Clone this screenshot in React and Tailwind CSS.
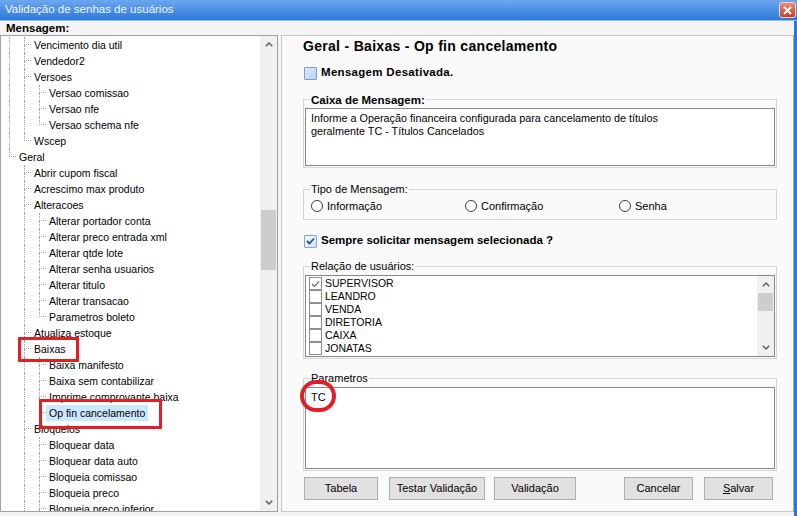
import React from "react";

const tree = [
  {
    t: null,
    c: [
      { t: "Vencimento dia util" },
      { t: "Vendedor2" },
      {
        t: "Versoes",
        c: [{ t: "Versao comissao" }, { t: "Versao nfe" }, { t: "Versao schema nfe" }],
      },
      { t: "Wscep" },
    ],
  },
  {
    t: "Geral",
    c: [
      { t: "Abrir cupom fiscal" },
      { t: "Acrescimo max produto" },
      {
        t: "Alteracoes",
        c: [
          { t: "Alterar portador conta" },
          { t: "Alterar preco entrada xml" },
          { t: "Alterar qtde lote" },
          { t: "Alterar senha usuarios" },
          { t: "Alterar titulo" },
          { t: "Alterar transacao" },
          { t: "Parametros boleto" },
        ],
      },
      { t: "Atualiza estoque" },
      {
        t: "Baixas",
        c: [
          { t: "Baixa manifesto" },
          { t: "Baixa sem contabilizar" },
          { t: "Imprime comprovante baixa" },
          { t: "Op fin cancelamento" },
        ],
      },
      {
        t: "Bloqueios",
        c: [
          { t: "Bloquear data" },
          { t: "Bloquear data auto" },
          { t: "Bloqueia comissao" },
          { t: "Bloqueia preco" },
          { t: "Bloqueia preco inferior" },
          { t: null },
        ],
      },
      { t: null },
    ],
  },
];

// rows with t: null are scrolled out of view but still count for the tree lines
function flatten(nodes, depth, guides, out) {
  nodes.forEach((n, i) => {
    const last = i === nodes.length - 1;
    if (n.t) out.push({ t: n.t, depth, guides, last });
    if (n.c) flatten(n.c, depth + 1, [...guides, !last], out);
  });
  return out;
}

const rows = flatten(tree, 0, [], []);

const users = ["SUPERVISOR", "LEANDRO", "VENDA", "DIRETORIA", "CAIXA", "JONATAS"];

function Chevron({ down }) {
  return (
    <svg width="8" height="5" viewBox="0 0 8 5">
      <path
        d={down ? "M0.8 0.8 L4 4 L7.2 0.8" : "M0.8 4.2 L4 1 L7.2 4.2"}
        fill="none"
        stroke="#606060"
        strokeWidth="1.5"
      />
    </svg>
  );
}

function TreeRow({ row }) {
  const sel = row.t === "Op fin cancelamento";
  return (
    <div className="flex h-[16px] items-stretch">
      {row.guides.map((g, k) => (
        <div key={k} className="w-[15px] shrink-0">
          {g && <div className="ml-[8px] h-full border-l border-dotted border-[#a0a0a0]" />}
        </div>
      ))}
      <div className="w-[15px] shrink-0 flex flex-col">
        <div className="ml-[8px] h-[8px] border-l border-b border-dotted border-[#a0a0a0]" />
        {!row.last && <div className="ml-[8px] flex-1 border-l border-dotted border-[#a0a0a0]" />}
      </div>
      <span
        className={`px-[3px] leading-[16px] whitespace-nowrap ${sel ? "bg-[#cce8ff]" : ""}`}
      >
        {row.t}
      </span>
    </div>
  );
}

function GroupBox({ label, bold, className, children }) {
  return (
    <div className={`relative border border-[#d5d5d5] ${className}`}>
      <span
        className={`absolute left-[6px] -top-[7px] px-[1px] bg-[#fafafa] whitespace-nowrap ${
          bold ? "font-bold text-[11.5px] leading-[14px]" : "text-[11px] leading-[13px]"
        }`}
      >
        {label}
      </span>
      {children}
    </div>
  );
}

function Radio({ label }) {
  return (
    <div className="w-[154px] flex items-center">
      <div className="w-[12px] h-[12px] rounded-full border border-[#3c3c3c] bg-white" />
      <span className="ml-[4px] text-[11px] leading-[14px]">{label}</span>
    </div>
  );
}

function Button({ label, className }) {
  return (
    <div
      className={`h-[23px] border border-[#adadad] bg-[#e1e1e1] flex items-center justify-center text-[11px] ${className}`}
    >
      {label}
    </div>
  );
}

export default function App() {
  return (
    <div className="w-[797px] h-[516px] flex flex-col overflow-hidden bg-[#f4f4f4] text-black [font-family:'Liberation_Sans',Arial,sans-serif]">
      {/* Title bar */}
      <div className="h-[21px] shrink-0 flex items-center justify-between bg-gradient-to-b from-[#6ba7ef] to-[#2b78dc] border-b border-[#8fbcf0]">
        <span className="pl-[5px] text-[11.5px] text-[#f2f6fc]">Validação de senhas de usuários</span>
        <div className="mr-[1px] w-[17px] h-[16px] rounded-[3px] border border-[#f3d6cf] bg-gradient-to-b from-[#ec8a72] to-[#c73c1f] flex items-center justify-center">
          <svg width="9" height="9" viewBox="0 0 9 9">
            <path d="M1 1 L8 8 M8 1 L1 8" stroke="white" strokeWidth="2" />
          </svg>
        </div>
      </div>

      <div className="flex-1 flex flex-col border-r-[3px] border-[#2d77dc]">
        <div className="h-[14px] pl-[6px] font-bold text-[11.5px] leading-[14px]">Mensagem:</div>

        <div className="h-[477px] flex">
          {/* Tree panel */}
          <div className="relative w-[278px] shrink-0 flex border border-[#a0a0a0] bg-white">
            <div className="flex-1 overflow-hidden pt-[1px] text-[10.5px]">
              {rows.map((r, i) => (
                <TreeRow key={i} row={r} />
              ))}
            </div>
            <div className="w-[17px] shrink-0 flex flex-col bg-[#f0f0f0]">
              <div className="h-[17px] flex items-center justify-center">
                <Chevron />
              </div>
              <div className="flex-1">
                <div className="mt-[157px] mx-[1px] h-[60px] bg-[#cdcdcd]" />
              </div>
              <div className="h-[17px] flex items-center justify-center">
                <Chevron down />
              </div>
            </div>
            <div className="absolute left-[17px] top-[301px] w-[61px] h-[25px] border-[3px] border-[#e31e24]" />
            <div className="absolute left-[38px] top-[363px] w-[123px] h-[30px] border-[3px] border-[#e31e24]" />
          </div>

          {/* Right panel */}
          <div className="ml-[3px] flex-1 flex flex-col border border-[#c8c8c8] border-r-[#a8a8a8] bg-[#fafafa] pl-[21px] pr-[16px]">
            <div className="h-[20px] leading-[20px] font-bold text-[14px] tracking-[0.3px]">
              Geral - Baixas - Op fin cancelamento
            </div>

            <div className="mt-[9px] h-[16px] flex items-center ml-[1px]">
              <div className="w-[13px] h-[13px] border border-[#7b9ccc] rounded-[1px] bg-gradient-to-br from-[#e3eefb] to-[#b3cfee]" />
              <span className="ml-[4px] font-bold text-[11.5px] tracking-[0.3px]">Mensagem Desativada.</span>
            </div>

            <GroupBox label="Caixa de Mensagem:" bold className="mt-[18px] pt-[8px] pb-[1px] px-[1px]">
              <div className="h-[58px] border border-[#828790] bg-white pl-[5px] pt-[3px] text-[10.8px] leading-[13px]">
                <div>Informe a Operação financeira configurada para cancelamento de títulos</div>
                <div>geralmente TC - Títulos Cancelados</div>
              </div>
            </GroupBox>

            <GroupBox label="Tipo de Mensagem:" className="mt-[21px] pt-[9px] pb-[6px] pl-[7px]">
              <div className="h-[14px] flex items-center">
                <Radio label="Informação" />
                <Radio label="Confirmação" />
                <Radio label="Senha" />
              </div>
            </GroupBox>

            <div className="mt-[13px] h-[16px] flex items-center ml-[1px]">
              <div className="w-[13px] h-[13px] border border-[#8aa6cf] rounded-[1px] bg-gradient-to-br from-[#f5f9fe] to-[#d6e4f5] flex items-center justify-center">
                <svg width="9" height="8" viewBox="0 0 9 8">
                  <path d="M1 4 L3.5 6.5 L8 1.5" fill="none" stroke="#2350a8" strokeWidth="1.8" />
                </svg>
              </div>
              <span className="ml-[4px] font-bold text-[11.5px]">Sempre solicitar mensagem selecionada ?</span>
            </div>

            <GroupBox label="Relação de usuários:" className="mt-[17px] pt-[8px] pb-[1px] px-[1px]">
              <div className="h-[82px] border border-[#828790] bg-white flex">
                <div className="flex-1 pt-[1px] text-[10.5px]">
                  {users.map((u, i) => (
                    <div key={u} className="h-[13px] flex items-center">
                      <div className="ml-[3px] w-[13px] h-[13px] border border-[#8f8f8f] bg-white flex items-center justify-center">
                        {i === 0 && (
                          <svg width="9" height="8" viewBox="0 0 9 8">
                            <path d="M1 4 L3.5 6.5 L8 1.5" fill="none" stroke="#6a6a6a" strokeWidth="1.2" />
                          </svg>
                        )}
                      </div>
                      <span className="ml-[3px] leading-[13px]">{u}</span>
                    </div>
                  ))}
                </div>
                <div className="w-[17px] flex flex-col bg-[#f0f0f0]">
                  <div className="h-[17px] flex items-center justify-center">
                    <Chevron />
                  </div>
                  <div className="mx-[1px] h-[18px] bg-[#cdcdcd]" />
                  <div className="flex-1" />
                  <div className="h-[17px] flex items-center justify-center">
                    <Chevron down />
                  </div>
                </div>
              </div>
            </GroupBox>

            <GroupBox label="Parametros" className="mt-[19px] pt-[8px] pb-[1px] px-[1px]">
              <div className="relative h-[82px] border border-[#828790] bg-white pl-[5px] pt-[3px] text-[11px] leading-[13px]">
                TC
                <div className="absolute -left-[6px] -top-[8px] w-[36px] h-[32px] rounded-full border-[4px] border-[#e31e24]" />
              </div>
            </GroupBox>

            <div className="mt-[6px] flex">
              <Button label="Tabela" className="ml-[1px] w-[74px]" />
              <Button label="Testar Validação" className="ml-[11px] w-[96px]" />
              <Button label="Validação" className="ml-[9px] w-[82px]" />
              <Button label="Cancelar" className="ml-[48px] w-[69px]" />
              <Button
                label={
                  <span>
                    <span className="underline">S</span>alvar
                  </span>
                }
                className="ml-[11px] w-[69px]"
              />
            </div>
          </div>
        </div>
      </div>
    </div>
  );
}
